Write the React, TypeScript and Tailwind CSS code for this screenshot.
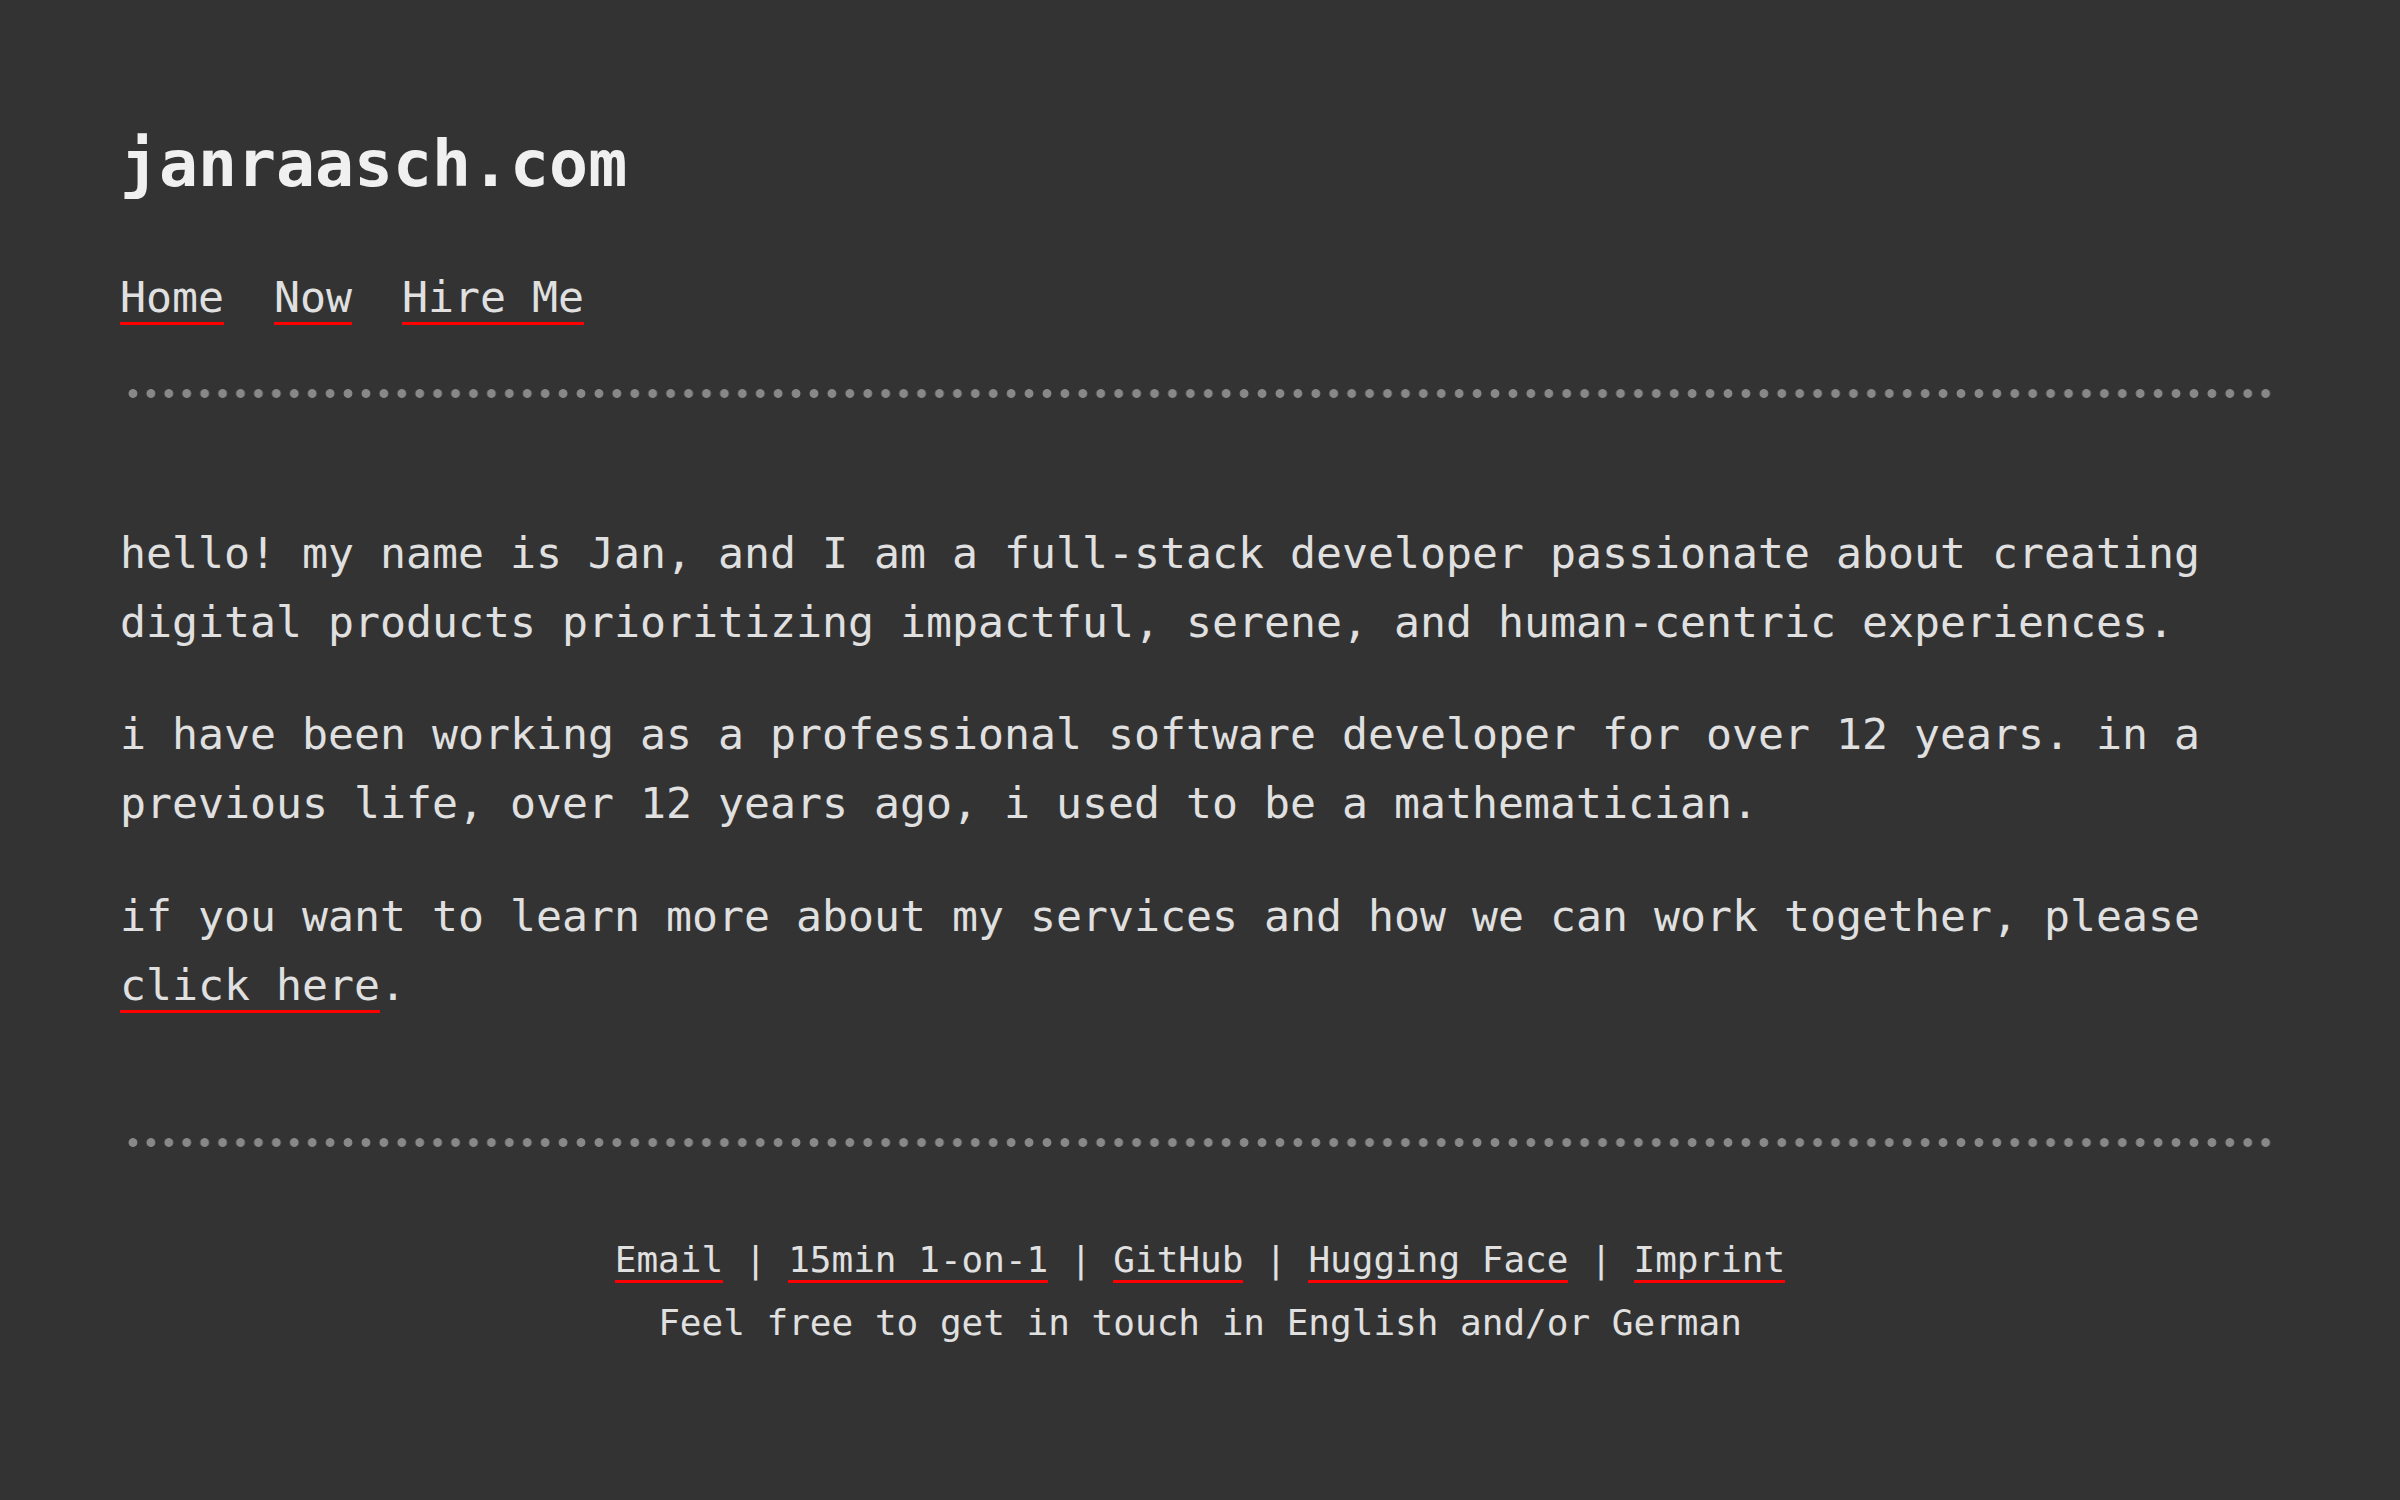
import React from "react";

const link = "border-b-[3px] border-[#ff0000] text-[#e0e0e0] no-underline";

function Dots({ className }: { className: string }) {
  return (
    <div
      className={`mx-[4px] h-[9px] bg-[radial-gradient(circle,#888888_4px,transparent_4.8px)] bg-[length:17.933px_9px] bg-repeat-x ${className}`}
    />
  );
}

export default function App() {
  return (
    <div className="min-h-[1500px] w-full bg-[#333333] font-['DejaVu_Sans_Mono',monospace] text-[#e0e0e0]">
      <div className="w-[2160px] pl-[120px] pt-[125px] box-content">
        <h1 className="text-[64.8px] leading-[1.2] font-bold text-[#f0f0f0]">janraasch.com</h1>
        <nav className="mt-[60px] flex gap-[50px] text-[43.2px] leading-[1.6]">
          <span><a href="#" className={link}>Home</a></span>
          <span><a href="#" className={link}>Now</a></span>
          <span><a href="#" className={link}>Hire Me</a></span>
        </nav>
        <Dots className="mt-[57px]" />
        <main className="mt-[121px] text-[43.2px] leading-[1.6]">
          <p>
            hello! my name is Jan, and I am a full-stack developer passionate about creating digital products prioritizing impactful, serene, and human-centric experiences.
          </p>
          <p className="mt-[43.2px]">
            i have been working as a professional software developer for over 12 years. in a previous life, over 12 years ago, i used to be a mathematician.
          </p>
          <p className="mt-[43.2px]">
            if you want to learn more about my services and how we can work together, please{" "}
            <a href="#" className={link}>click here</a>.
          </p>
        </main>
        <Dots className="mt-[118px]" />
        <footer className="mt-[81px] text-center text-[36px] leading-[63px]">
          <div>
            <a href="#" className={link}>Email</a>{" | "}
            <a href="#" className={link}>15min 1-on-1</a>{" | "}
            <a href="#" className={link}>GitHub</a>{" | "}
            <a href="#" className={link}>Hugging Face</a>{" | "}
            <a href="#" className={link}>Imprint</a>
          </div>
          <div>Feel free to get in touch in English and/or German</div>
        </footer>
      </div>
    </div>
  );
}
